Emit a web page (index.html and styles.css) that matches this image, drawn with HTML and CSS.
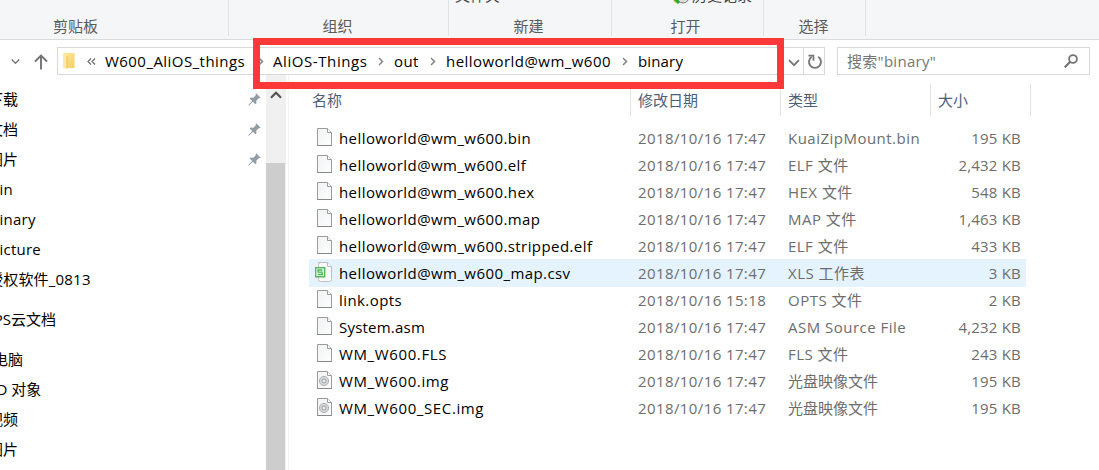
FILE: index.html
```html
<!DOCTYPE html>
<html lang="zh-CN">
<head>
<meta charset="utf-8">
<title>binary</title>
<link rel="stylesheet" href="styles.css">
</head>
<body>
<svg class="defs" width="0" height="0">
  <defs>
    <linearGradient id="paper" x1="0" y1="0" x2="1" y2="1"><stop offset="0" stop-color="#f1f3f4"/><stop offset="1" stop-color="#fdfdfd"/></linearGradient>
    <linearGradient id="gold" x1="0" y1="0" x2="1" y2="1"><stop offset="0" stop-color="#ffe79a"/><stop offset="1" stop-color="#f7cf63"/></linearGradient>
    <symbol id="file" viewBox="0 0 15 18">
      <path d="M.5.5h10l4 4v13H.5z" fill="url(#paper)" stroke="#999b9d"/>
      <path d="M10.500.5v4h4" fill="#fff" stroke="#999b9d"/><path d="M0 17.500h15" stroke="#858789"/>
    </symbol>
    <symbol id="disc" viewBox="0 0 15 18">
      <use href="#file" width="15" height="18"/>
      <circle cx="7" cy="10" r="4.600" fill="#d5d8da" stroke="#aeb2b5"/><circle cx="7" cy="10" r="2" fill="#eef0f1" stroke="#999da0"/>
    </symbol>
    <symbol id="pin" viewBox="0 0 13 13">
      <path d="M8.200.3 12.700 4.800 11.600 5.300 11 5 8.300 7.700 8.400 10.500 7.400 11.200 4.900 8.700 1 12.500.2 12.700.4 11.900 4.200 8 1.700 5.500 2.500 4.600 5.300 4.700 8 2 7.600 1.200z" fill="#929da4"/>
    </symbol>
    <symbol id="next" viewBox="0 0 6 9"><path d="m1 1 3.500 3.500L1 8" fill="none" stroke="#858585" stroke-width="1.500"/></symbol>
    <symbol id="down" viewBox="0 0 12 8"><path d="m1 1.200 5 5 5-5" fill="none" stroke="#777" stroke-width="1.900"/></symbol>
  </defs>
</svg>
<div class="window">
  <header class="ribbon">
    <section class="group g1"><span class="label">剪贴板</span></section>
    <section class="group g2"><span class="label">组织</span></section>
    <section class="group g3"><span class="command folder-cmd">文件夹</span><span class="label">新建</span></section>
    <section class="group g4">
      <span class="command history-cmd"><svg width="18" height="18" viewBox="0 0 18 18"><path d="M0 13h5v4H3z" fill="#e9cf50"/><circle cx="11" cy="11" r="6" fill="#ddd" stroke="#777"/><path d="m3 13 4 4" stroke="#25ad35" stroke-width="3"/><path d="M11 8v5" stroke="#888"/></svg><span>历史记录</span></span>
      <span class="label">打开</span>
    </section>
    <section class="group g5"><span class="label">选择</span></section>
  </header>

  <nav class="toolbar">
    <svg class="recent" width="9" height="7" viewBox="0 0 12 8"><use href="#down"/></svg>
    <svg class="up" width="14" height="16" viewBox="0 0 14 16"><path d="M7 15.500V1.500M1 7.500l6-6 6 6" fill="none" stroke="#737373" stroke-width="1.900"/></svg>
    <div class="address">
      <svg class="folder" width="13" height="18" viewBox="0 0 13 18"><path d="M1 1h10.500v15H1z" fill="url(#gold)"/><path d="M0 1l4 2.500V17.500L0 16z" fill="#ffe9a6"/><path d="M4 4v12" stroke="#e7bd58"/></svg>
      <svg class="more" width="9" height="7" viewBox="0 0 9 7"><path d="M4 .5 1 3.500l3 3M8 .5 5 3.500l3 3" fill="none" stroke="#666" stroke-width="1.100"/></svg>
      <span class="crumb c1">W600_AliOS_things</span><svg class="sep" width="6" height="9"><use href="#next"/></svg>
      <span class="crumb c2">AliOS-Things</span><svg class="sep" width="6" height="9"><use href="#next"/></svg>
      <span class="crumb c3">out</span><svg class="sep" width="6" height="9"><use href="#next"/></svg>
      <span class="crumb c4">helloworld@wm_w600</span><svg class="sep" width="6" height="9"><use href="#next"/></svg>
      <span class="crumb c5">binary</span>
      <svg class="history" width="12" height="8"><use href="#down"/></svg>
      <span class="refresh"><svg width="16" height="16" viewBox="0 0 16 16"><path d="M11.200 2.800a6 6 0 1 1-6.400 0" fill="none" stroke="#777" stroke-width="1.900"/><path d="M1.500 1.700h5v5" fill="none" stroke="#777" stroke-width="1.700"/></svg></span>
    </div>
    <div class="search"><span>搜索"binary"</span><svg width="14" height="14" viewBox="0 0 14 14"><circle cx="9" cy="5" r="3.900" fill="none" stroke="#737373" stroke-width="1.800"/><path d="M6.200 7.800.7 13.300" stroke="#737373" stroke-width="2.200"/></svg></div>
    <div class="highlight"></div>
  </nav>

  <main class="content">
    <aside class="tree">
      <div class="item"><span>下载</span><svg width="13" height="13"><use href="#pin"/></svg></div>
      <div class="item"><span>文档</span><svg width="13" height="13"><use href="#pin"/></svg></div>
      <div class="item"><span>图片</span><svg width="13" height="13"><use href="#pin"/></svg></div>
      <div class="item latin"><span>bin</span></div>
      <div class="item latin"><span>binary</span></div>
      <div class="item latin"><span>picture</span></div>
      <div class="item"><span class="mixed">授权软件_0813</span></div>
      <div class="item root"><span class="wps">WPS云文档</span></div>
      <div class="item root"><span>此电脑</span></div>
      <div class="item"><span>3D 对象</span></div>
      <div class="item"><span>视频</span></div>
      <div class="item"><span>图片</span></div>
    </aside>
    <div class="scrollbar"><svg width="12" height="8" viewBox="0 0 12 8"><path d="m1 6.700 5-5 5 5" fill="none" stroke="#505050" stroke-width="2"/></svg><div class="thumb"></div></div>
    <section class="files">
      <div class="heads"><span class="name">名称</span><span>修改日期</span><span>类型</span><span class="last">大小</span></div>
      <div class="row"><svg width="15" height="18"><use href="#file"/></svg><span class="fn">helloworld@wm_w600.bin</span><span class="date">2018/10/16 17:47</span><span class="type">KuaiZipMount.bin</span><span class="size">195 KB</span></div>
      <div class="row"><svg width="15" height="18"><use href="#file"/></svg><span class="fn">helloworld@wm_w600.elf</span><span class="date">2018/10/16 17:47</span><span class="type">ELF 文件</span><span class="size">2,432 KB</span></div>
      <div class="row"><svg width="15" height="18"><use href="#file"/></svg><span class="fn">helloworld@wm_w600.hex</span><span class="date">2018/10/16 17:47</span><span class="type">HEX 文件</span><span class="size">548 KB</span></div>
      <div class="row"><svg width="15" height="18"><use href="#file"/></svg><span class="fn">helloworld@wm_w600.map</span><span class="date">2018/10/16 17:47</span><span class="type">MAP 文件</span><span class="size">1,463 KB</span></div>
      <div class="row"><svg width="15" height="18"><use href="#file"/></svg><span class="fn">helloworld@wm_w600.stripped.elf</span><span class="date">2018/10/16 17:47</span><span class="type">ELF 文件</span><span class="size">433 KB</span></div>
      <div class="row selected"><svg class="sheet" width="17" height="20" viewBox="0 0 17 20"><path d="M3.500.5h9l4 4v13q0 2-2 2h-9q-2 0-2-2v-15q0-2 2-2z" fill="#fafafa" stroke="#bcbfc1"/><path d="M12.500.5v4h4" fill="#fff" stroke="#bcbfc1"/><path d="M.7 5.700h9v9h-9z" fill="#fff" stroke="#55b95a" stroke-width="1.400"/><path d="M7.500 8H3v2.200h4.200v2.300H2.700" fill="none" stroke="#45b44b" stroke-width="1.300"/></svg><span class="fn">helloworld@wm_w600_map.csv</span><span class="date">2018/10/16 17:47</span><span class="type">XLS 工作表</span><span class="size">3 KB</span></div>
      <div class="row"><svg width="15" height="18"><use href="#file"/></svg><span class="fn">link.opts</span><span class="date">2018/10/16 15:18</span><span class="type">OPTS 文件</span><span class="size">2 KB</span></div>
      <div class="row"><svg width="15" height="18"><use href="#file"/></svg><span class="fn system">System.asm</span><span class="date">2018/10/16 17:47</span><span class="type">ASM Source File</span><span class="size">4,232 KB</span></div>
      <div class="row"><svg width="15" height="18"><use href="#file"/></svg><span class="fn caps">WM_W600.FLS</span><span class="date">2018/10/16 17:47</span><span class="type">FLS 文件</span><span class="size">243 KB</span></div>
      <div class="row"><svg width="15" height="18"><use href="#disc"/></svg><span class="fn caps">WM_W600.img</span><span class="date">2018/10/16 17:47</span><span class="type han">光盘映像文件</span><span class="size">195 KB</span></div>
      <div class="row"><svg width="15" height="18"><use href="#disc"/></svg><span class="fn caps">WM_W600_SEC.img</span><span class="date">2018/10/16 17:47</span><span class="type han">光盘映像文件</span><span class="size">195 KB</span></div>
    </section>
  </main>
</div>
</body>
</html>
```
FILE: styles.css
```css
* { box-sizing: border-box; }
body { margin: 0; background: #fff; color: #000; font: 15px/20px "Open Sans", "Noto Sans CJK SC", sans-serif; overflow: hidden; }
svg { display: block; flex: none; }
.defs { position: absolute; }
.window { width: 1099px; height: 470px; display: flex; flex-direction: column; overflow: hidden; }

.ribbon { height: 40px; flex: none; display: flex; background: #f5f6f7; border-bottom: 1px solid #dadbdc; overflow: hidden; }
.group { position: relative; height: 36px; flex: none; border-right: 1px solid #e0e2e3; display: flex; justify-content: center; padding-top: 16px; color: #5b5b5b; }
.g1 { width: 229px; padding-right: 77px; }
.g2 { width: 220px; padding-right: 2px; }
.g3 { width: 163px; padding-right: 3px; }
.g4 { width: 152px; padding-right: 4px; }
.g5 { width: 102px; padding-right: 2px; }
.command { position: absolute; top: -15px; left: 6px; color: #444; white-space: nowrap; }
.history-cmd { left: 60px; top: -14px; display: flex; }
.history-cmd span { margin: -1px 0 0 2px; }

.toolbar { position: relative; height: 35px; flex: none; display: flex; align-items: center; padding-top: 7px; }
.recent { margin: 1px 0 0 11px; }
.up { margin: 2px 0 0 14px; }
.address { width: 768px; height: 28px; margin-left: 9px; border: 1px solid #d9d9d9; display: flex; align-items: center; white-space: nowrap; }
.folder { margin-left: 5px; }
.more { margin-left: 11px; }
.crumb { flex: none; margin-top: -1px; letter-spacing: .45px; }
.c1 { width: 141px; margin-left: 9px; margin-right: 12px; }
.c2 { width: 94px; margin-left: 9px; margin-right: 11px; letter-spacing: .58px; }
.c3 { width: 25px; margin-left: 10px; margin-right: 11px; }
.c4 { width: 165px; margin-left: 10px; margin-right: 11px; }
.c5 { margin-left: 10px; letter-spacing: .15px; }
.history { margin: 3px 3px 0 auto; }
.refresh { width: 21px; height: 26px; border-left: 1px solid #d9d9d9; display: flex; align-items: center; justify-content: center; padding: 2px 0 0 1px; }
.search { width: 253px; height: 28px; margin-left: 12px; border: 1px solid #d9d9d9; display: flex; align-items: center; justify-content: space-between; padding: 0 11px 0 9px; color: #757575; }
.search span { letter-spacing: .3px; }
.highlight { position: absolute; left: 253px; top: -2px; width: 531px; height: 51px; border: 7px solid #fd3838; z-index: 2; }

.content { display: flex; flex: 1; min-height: 0; }
.tree { width: 266px; flex: none; padding-top: 9px; overflow: hidden; }
.item { height: 30px; display: flex; align-items: center; justify-content: space-between; padding-right: 5px; }
.item span { margin-left: -12px; white-space: nowrap; }
.item.latin span { margin-left: -10px; letter-spacing: .25px; }
.item .mixed { letter-spacing: .2px; }
.root { margin: 10px 0; }
.root + .root { margin-bottom: 0; }
.root span { margin-left: -22px; }
.root .wps { margin-left: -20px; }
.scrollbar { width: 20px; flex: none; background: #f0f0f0; padding-top: 16px; }
.scrollbar svg { margin-left: 4px; }
.thumb { width: 19px; margin-top: 64px; height: 330px; background: #cdcdcd; }
.files { width: 744px; flex: none; margin-left: 2px; padding-top: 9px; border-left: 1px solid #f3f3f3; }
.heads { height: 32px; display: flex; margin-bottom: 8px; color: #4c607a; }
.heads span { width: 150px; flex: none; border-right: 1px solid #e3e3e3; padding: 6px 0 0 7px; }
.heads .name { width: 342px; padding-left: 23px; }
.heads .last { width: 100px; }
.row { height: 27px; width: 717px; margin-left: 20px; display: flex; align-items: center; white-space: nowrap; color: #6d6d6d; }
.row > svg { margin: -1px 7px 0 8px; }
.row .sheet { margin: -2px 7px 0 6px; }
.row .fn { width: 299px; color: #000; letter-spacing: .42px; }
.row .system { letter-spacing: .22px; }
.row .caps { letter-spacing: .62px; }
.date { width: 150px; letter-spacing: .4px; }
.type { width: 143px; letter-spacing: .48px; }
.han { letter-spacing: 0; }
.size { width: 90px; text-align: right; letter-spacing: .2px; }
.selected { background: #e5f3ff; box-shadow: 0 1px #e5f3ff; }
```
